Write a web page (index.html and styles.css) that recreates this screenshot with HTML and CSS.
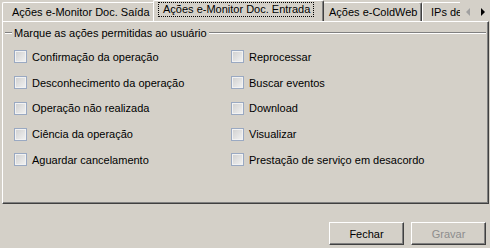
FILE: index.html
```html
<!DOCTYPE html>
<html lang="pt">
<head>
<meta charset="utf-8">
<link rel="stylesheet" href="styles.css">
</head>
<body>
<div class="window">
  <div class="tabstrip">
    <div class="tabs">
      <div class="tab tab-1">Ações e-Monitor Doc. Saída</div>
      <div class="tab tab-2 selected"><span class="focus">Ações e-Monitor Doc. Entrada</span></div>
      <div class="tab tab-3">Ações e-ColdWeb</div>
      <div class="tab tab-4">IPs de acesso</div>
    </div>
    <div class="scroller">
      <span class="arrow left"></span>
      <span class="arrow right"></span>
    </div>
  </div>
  <div class="panel">
    <div class="group">
      <div class="legend"><span class="legend-text">Marque as ações permitidas ao usuário</span></div>
      <div class="options">
        <label class="opt"><span class="box"></span>Confirmação da operação</label>
        <label class="opt"><span class="box"></span>Reprocessar</label>
        <label class="opt"><span class="box"></span>Desconhecimento da operação</label>
        <label class="opt"><span class="box"></span>Buscar eventos</label>
        <label class="opt"><span class="box"></span>Operação não realizada</label>
        <label class="opt"><span class="box"></span>Download</label>
        <label class="opt"><span class="box"></span>Ciência da operação</label>
        <label class="opt"><span class="box"></span>Visualizar</label>
        <label class="opt"><span class="box"></span>Aguardar cancelamento</label>
        <label class="opt"><span class="box"></span>Prestação de serviço em desacordo</label>
      </div>
    </div>
  </div>
  <div class="footer">
    <button class="btn">Fechar</button>
    <button class="btn disabled">Gravar</button>
  </div>
</div>
</body>
</html>
```
FILE: styles.css
```css
html, body {
  margin: 0;
  padding: 0;
  background: #d4d0c8;
}
body {
  width: 490px;
  height: 248px;
  overflow: hidden;
  font-family: "Liberation Sans", Arial, sans-serif;
  font-size: 11px;
  color: #000;
}
.window {
  display: flex;
  flex-direction: column;
  height: 248px;
}
.tabstrip {
  display: flex;
  height: 21px;
  position: relative;
  z-index: 2;
}
.tabs {
  display: flex;
  flex: 1;
  overflow: hidden;
  padding-left: 2px;
  align-items: flex-end;
}
.tab {
  flex: none;
  box-sizing: border-box;
  height: 19px;
  border-top: 1px solid #fff;
  border-left: 1px solid #fff;
  border-right: 1px solid #404040;
  box-shadow: inset -1px 0 0 #808080;
  border-radius: 2px 2px 0 0;
  padding: 3px 0 0 9px;
  white-space: nowrap;
  background: #d4d0c8;
}
.tab-1 { width: 153px; }
.tab-2 { width: 171px; }
.tab-3 { width: 99px; padding-left: 5px; }
.tab-4 { width: 60px; padding-left: 8px; }
.tab.selected {
  height: 22px;
  margin: 0 -1px 0 -2px;
  position: relative;
  z-index: 1;
  padding: 2px 0 0 5px;
  margin-bottom: -1px;
}
.focus {
  display: inline-block;
  outline: 1px dotted #000;
  outline-offset: 0;
  padding: 0 3px 1px 4px;
}
.scroller {
  width: 30px;
  display: flex;
  align-items: center;
  justify-content: space-around;
  padding-top: 2px;
  background: #d4d0c8;
}
.arrow {
  width: 0;
  height: 0;
  border-top: 4px solid transparent;
  border-bottom: 4px solid transparent;
}
.arrow.left { border-right: 4px solid #a0a0a0; }
.arrow.right { border-left: 4px solid #000; }
.panel {
  box-sizing: border-box;
  height: 183px;
  margin: 0 1px 0 2px;
  border-top: 1px solid #fff;
  border-left: 1px solid #fff;
  border-right: 1px solid #404040;
  border-bottom: 1px solid #404040;
  box-shadow: inset -1px -1px 0 #808080;
  padding: 4px 2px 0 2px;
}
.group {
  display: flex;
  flex-direction: column;
}
.legend {
  height: 14px;
  display: flex;
  align-items: center;
  padding-left: 7px;
  background: linear-gradient(#d4d0c8 6px, #808080 6px, #808080 7px, #fff 7px, #fff 8px, #d4d0c8 8px);
}
.legend-text {
  background: #d4d0c8;
  padding: 0 2px;
  line-height: 14px;
}
.options {
  display: grid;
  grid-template-columns: 217px 1fr;
  grid-auto-rows: 25.75px;
  padding: 4px 0 0 9px;
}
.opt {
  display: flex;
  align-items: center;
  gap: 5px;
  white-space: nowrap;
}
.box {
  box-sizing: border-box;
  width: 13px;
  height: 13px;
  border: 1px solid #9aa9c2;
  box-shadow: inset 0 0 0 1px #f2f2f2;
  background: linear-gradient(135deg, #cfcfcf, #f3f3f3);
  flex: none;
}
.footer {
  display: flex;
  justify-content: flex-end;
  gap: 7px;
  padding: 18px 4px 0 0;
}
.btn {
  box-sizing: border-box;
  width: 75px;
  height: 23px;
  font: inherit;
  color: #000;
  background: #d4d0c8;
  border-top: 1px solid #fff;
  border-left: 1px solid #fff;
  border-right: 1px solid #404040;
  border-bottom: 1px solid #404040;
  box-shadow: inset -1px -1px 0 #808080;
  padding: 0;
  border-radius: 0;
}
.btn.disabled {
  color: #8d8d8d;
}
```
